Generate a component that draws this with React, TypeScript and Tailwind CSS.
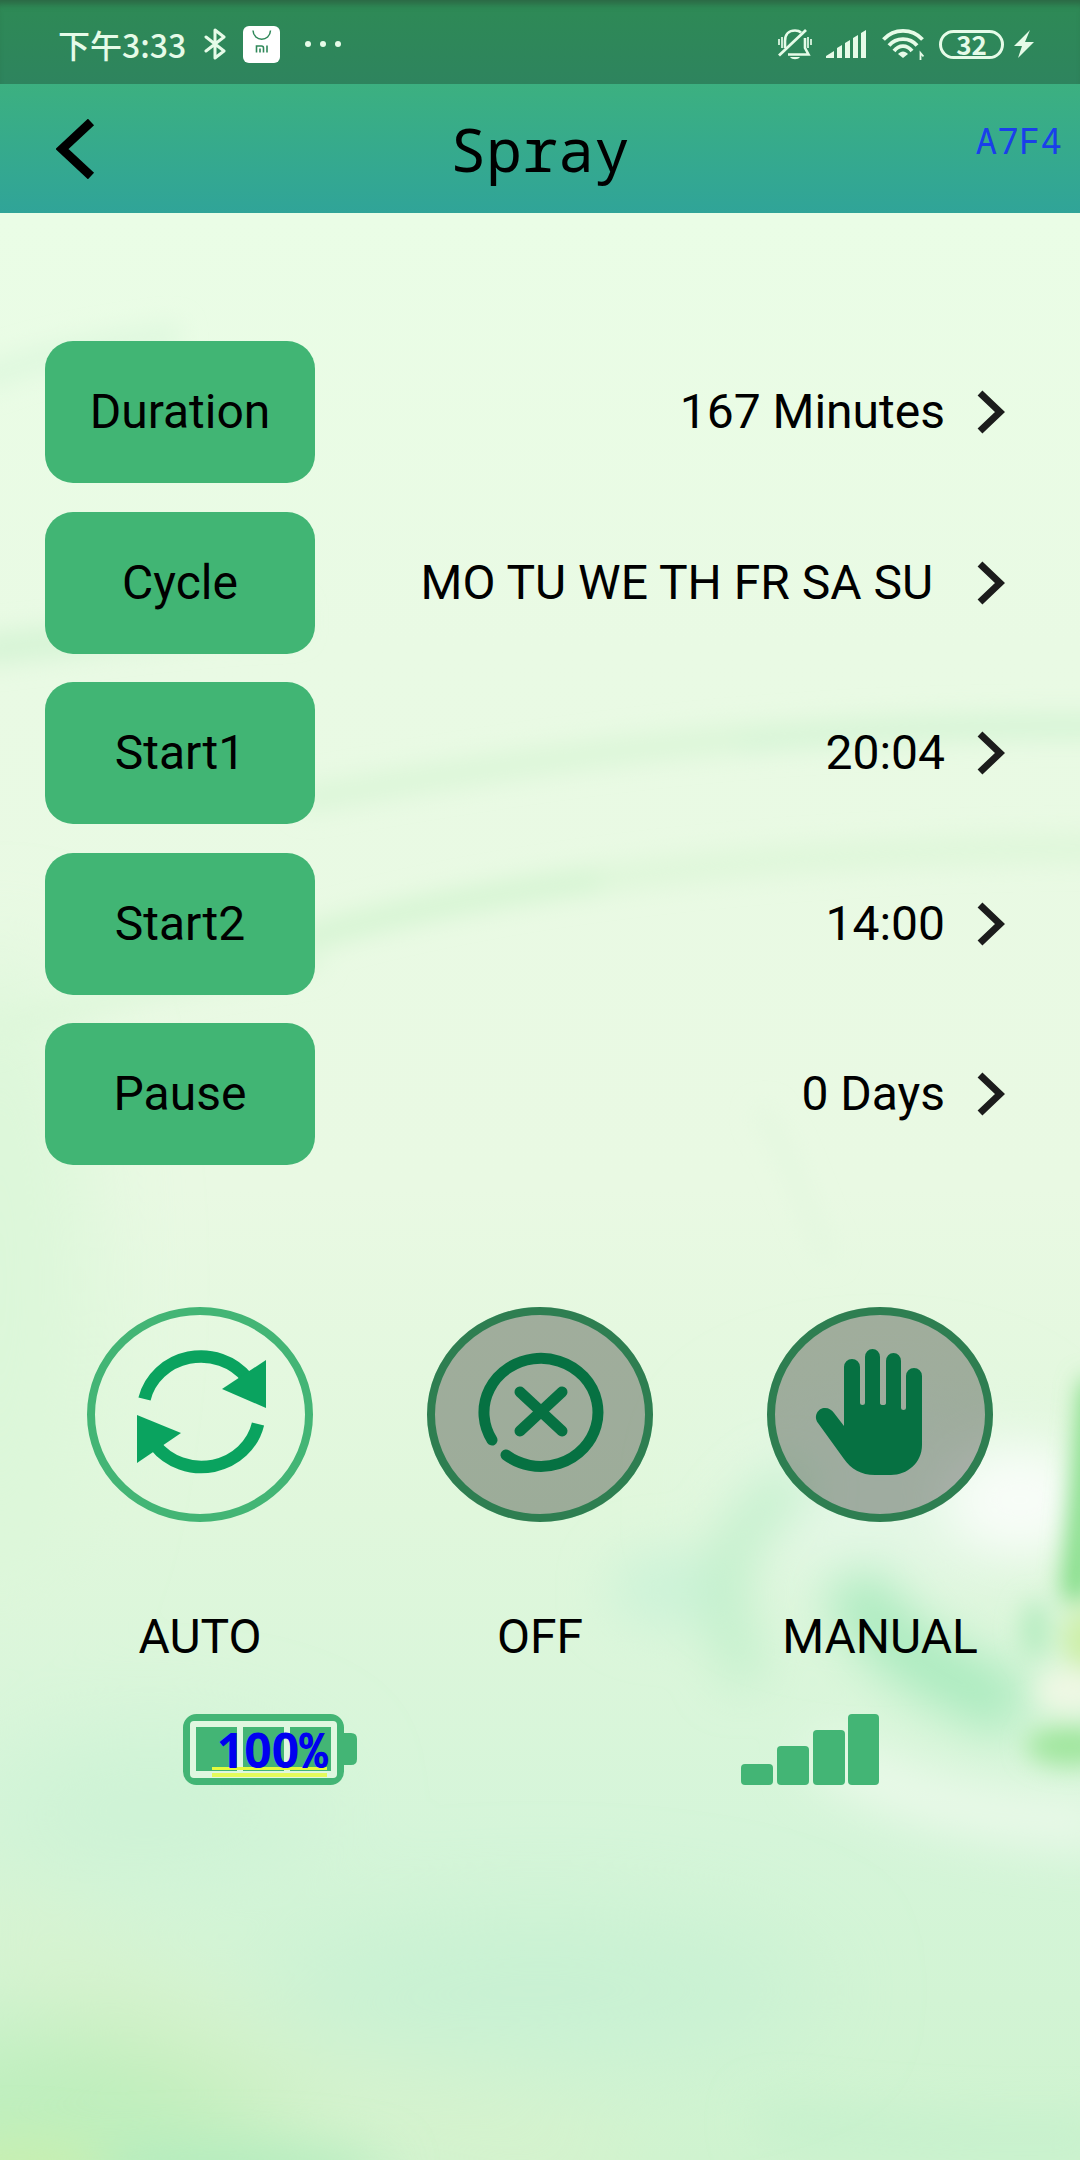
import React, { useState } from 'react';

interface Setting {
  label: string;
  value: string;
}

interface Mode {
  name: string;
  icon: React.ReactNode;
}

const settings: Setting[] = [
  { label: 'Duration', value: '167 Minutes' },
  { label: 'Cycle', value: 'MO TU WE TH FR SA SU ' },
  { label: 'Start1', value: '20:04' },
  { label: 'Start2', value: '14:00' },
  { label: 'Pause', value: '0 Days' },
];

const AutoIcon = () => (
  <>
    <g fill="none" stroke="#0aa35f" strokeWidth="12.500">
      <path d="M57.500 92A58 55 0 0 1 160 71" />
      <path d="M171 117A58 55 0 0 1 68 138" />
    </g>
    <path d="M179 53V101L135 82Z" fill="#0aa35f" />
    <path d="M50 108V156L94 126Z" fill="#0aa35f" />
  </>
);

const OffIcon = () => (
  <g fill="none" stroke="#0aa35f" strokeWidth="11" strokeLinecap="round">
    <path d="M65 133A57 54 0 1 1 79 148" />
    <path d="M93 85L135 124M135 85L93 124" />
  </g>
);

const HandIcon = () => (
  <path
    fill="#0aa35f"
    d="M77 119V60a8 8 0 0 1 16 0V96q0 2 2.500 2t2.500-2V50a7.500 8 0 0 1 15 0V96q0 2 3 2t3-2V54a7.500 8 0 0 1 15 0V101q0 2 2.500 2t2.500-2V69a8 8 0 0 1 16 0V138C155 156 140 168 124 168H108C94 168 84 162 77 152L51 116C46 109 51 101 58 101C62 101 65 103 67 106Z"
  />
);

const modes: Mode[] = [
  { name: 'AUTO', icon: <AutoIcon /> },
  { name: 'OFF', icon: <OffIcon /> },
  { name: 'MANUAL', icon: <HandIcon /> },
];

// Soft water ripple wallpaper
const Wallpaper = () => (
  <svg
    className="absolute inset-0 -z-10 h-full w-full"
    viewBox="0 0 1080 2160"
    preserveAspectRatio="none"
    aria-hidden="true"
  >
    <defs>
      <linearGradient id="base" x1="0" y1="0" x2="0" y2="1">
        <stop offset="0.1" stopColor="#eafde6" />
        <stop offset="0.3" stopColor="#e9fae4" />
        <stop offset="0.55" stopColor="#e9f9e3" />
        <stop offset="0.7" stopColor="#e0f7dc" />
        <stop offset="0.85" stopColor="#d5f5d9" />
        <stop offset="1" stopColor="#cff3cf" />
      </linearGradient>
      <filter id="b10" x="-50%" y="-50%" width="200%" height="200%">
        <feGaussianBlur stdDeviation="12" />
      </filter>
      <filter id="b25" x="-50%" y="-50%" width="200%" height="200%">
        <feGaussianBlur stdDeviation="25" />
      </filter>
      <filter id="b50" x="-60%" y="-60%" width="220%" height="220%">
        <feGaussianBlur stdDeviation="50" />
      </filter>
    </defs>
    <rect width="1080" height="2160" fill="url(#base)" />

    <g filter="url(#b50)">
      <ellipse cx="0" cy="1280" rx="90" ry="330" fill="#dcf7d9" />
      <ellipse cx="150" cy="1810" rx="170" ry="70" fill="#cef3d5" />
      <ellipse cx="540" cy="1990" rx="280" ry="70" fill="#c8f1d3" />
      <ellipse cx="90" cy="2110" rx="230" ry="80" fill="#bdeebb" />
      <path d="M-40 1910L300 2090L620 2170" stroke="#dcf2cb" strokeWidth="50" fill="none" />
      <ellipse cx="880" cy="1500" rx="150" ry="90" fill="#e4f7e6" />
    </g>

    <g filter="url(#b10)" fill="none">
      <path d="M300 800C550 755 780 722 1110 726" stroke="#dbf6d8" strokeWidth="26" />
      <path d="M740 745C860 732 960 726 1110 728" stroke="#d3f4d5" strokeWidth="12" />
      <path d="M300 940C450 895 700 850 1110 848" stroke="#dff7da" strokeWidth="28" />
      <path d="M300 940C400 910 500 892 600 880" stroke="#d3f4d1" strokeWidth="16" />
      <path d="M-20 650C80 640 200 620 300 620" stroke="#d6f4d5" strokeWidth="30" />
      <path d="M-20 1040C60 1005 140 990 320 960" stroke="#def7da" strokeWidth="20" />
      <path d="M-20 380C40 355 100 345 180 335" stroke="#def8de" strokeWidth="24" />
      <path d="M760 1110C790 1150 800 1200 830 1260" stroke="#e3f7df" strokeWidth="16" />
    </g>

    <g filter="url(#b25)">
      <ellipse cx="670" cy="1590" rx="60" ry="40" fill="#cdf3d8" />
      <path d="M800 1480C700 1540 720 1620 750 1680" stroke="#bceec8" strokeWidth="34" fill="none" />
      <path d="M850 1580C880 1650 950 1680 1020 1710" stroke="#a8eabd" strokeWidth="60" fill="none" />
      <ellipse cx="1020" cy="1500" rx="76" ry="56" fill="#f8fdf8" />
      <path d="M820 1750C900 1800 980 1818 1110 1825" stroke="#f0faee" strokeWidth="40" fill="none" />
      <path d="M760 2120C900 2140 1000 2140 1110 2138" stroke="#c0efcb" strokeWidth="26" fill="none" />
      <ellipse cx="220" cy="2170" rx="170" ry="22" fill="#b0ebbb" />
      <ellipse cx="20" cy="2170" rx="90" ry="26" fill="#c8efac" />
    </g>

    <g filter="url(#b10)">
      <path d="M1095 1380L1075 1600" stroke="#78da7d" strokeWidth="26" />
      <ellipse cx="1085" cy="1640" rx="22" ry="30" fill="#cdefa8" />
      <ellipse cx="1035" cy="1630" rx="14" ry="30" fill="#b5ecc0" />
      <ellipse cx="1070" cy="1690" rx="34" ry="22" fill="#eff8e4" />
      <ellipse cx="1070" cy="1746" rx="44" ry="20" fill="#a0e69e" />
    </g>
  </svg>
);

const StatusBar = () => (
  <div className="flex h-[84px] items-center justify-between bg-linear-to-b from-[#2e8a55] to-[#2e845e] pt-1 pr-[46px] pl-[58px] shadow-[inset_0_8px_6px_-4px_#2c6845]">
    <div className="flex items-center">
      <span className="font-['Noto_Sans_CJK_SC',sans-serif] text-[32px] leading-9 font-medium text-[#e6fbe8]">
        下午3:33
      </span>
      <svg className="ml-[18px] h-8 w-[22px]" viewBox="0 0 22 32" fill="none" stroke="#e6fbe8" strokeWidth="3" strokeLinecap="round" strokeLinejoin="round">
        <path d="M2 9L20 23L11 30V2L20 9L2 23" />
      </svg>
      <svg className="ml-[17px] h-[37px] w-[37px]" viewBox="0 0 37 37" fill="none">
        <rect width="37" height="37" rx="6" fill="#fff" />
        <path d="M10 4.500C10.500 16 27 16 27.500 4.500" stroke="#2f8859" strokeWidth="1.500" />
        <path d="M13.500 26.500V20H18.500Q20.500 20 20.500 22V26.500M17 22.500V26.500M24 19.500V26.500" stroke="#2f8859" strokeWidth="1.600" />
      </svg>
      <svg className="ml-[25px] h-2 w-[37px]" viewBox="0 0 37 8" fill="#e6fbe8">
        <circle cx="3" cy="4" r="3" />
        <circle cx="18" cy="4" r="3" />
        <circle cx="33" cy="4" r="3" />
      </svg>
    </div>

    <div className="flex items-center">
      <svg className="h-8 w-[34px]" viewBox="0 0 34 32" fill="none" stroke="#e6fbe8" strokeWidth="2.600">
        <path d="M7 20V13C7 6 11 2.500 17 2.500C19.500 2.500 21.500 3 23 4.500M27 10V20L30.500 26.500H10" />
        <path d="M1 27.500L28 2" strokeWidth="2.800" />
        <path d="M1 11V17M4 9V20M30 9V20M33 11V17" strokeWidth="1.700" />
        <path d="M12 29C14 32 20 32 22 29Z" fill="#e6fbe8" stroke="none" />
      </svg>
      <svg className="ml-3.5 h-7 w-10" viewBox="0 0 40 28" fill="#e6fbe8">
        <path d="M0 28V26L8 21V28ZM11 28V18L16 15V28ZM19 28V13L24 10V28ZM27 28V8L32 5V28ZM35 28V3L40 0V28Z" />
      </svg>
      <svg className="ml-4 h-8 w-[42px]" viewBox="0 0 42 32" fill="none" stroke="#e6fbe8" strokeWidth="3.800">
        <path d="M1.500 11.500C12 0 30 0 40.500 11.500" />
        <path d="M7 17.500C14 9 28 9 35 17.500" />
        <path d="M12 23C17 16.500 25 16.500 30 23" />
        <path d="M16 26C19 22.500 23 22.500 26 26L21 30Z" fill="#e6fbe8" stroke="none" />
        <path d="M38.500 32V25L41.500 28.500" strokeWidth="1.800" />
      </svg>
      <span className="ml-[15px] flex h-[29px] w-[65px] items-center justify-center rounded-full border-3 border-[#e6fbe8] font-['Noto_Sans_CJK_SC',sans-serif] text-[26px] leading-6 font-bold text-[#e6fbe8]">
        32
      </span>
      <svg className="ml-2.5 h-7 w-5" viewBox="0 0 20 28" fill="#e6fbe8">
        <path d="M16 0L0 16H8L4 28L20 12H11Z" />
      </svg>
    </div>
  </div>
);

const SettingRow: React.FC<Setting> = ({ label, value }) => (
  <div className="flex items-center justify-between">
    <button className="h-[142px] w-[270px] rounded-[28px] bg-[#41b574] text-[48px] leading-14">{label}</button>
    <button className="flex items-center gap-8 text-[48px] leading-14 whitespace-pre">
      {value}
      <svg className="h-11 w-7" viewBox="0 0 28 44" fill="none" stroke="#1c1c1c" strokeWidth="7">
        <path d="M3 3L23 22L3 41" />
      </svg>
    </button>
  </div>
);

const ModeButton: React.FC<Mode & { active: boolean; onSelect: () => void }> = ({ name, icon, active, onSelect }) => (
  <button onClick={onSelect} aria-pressed={active} className="flex flex-col items-center gap-[87px]">
    <svg className="h-[215px] w-[226px]" viewBox="0 0 226 215">
      <ellipse cx="113" cy="107.500" rx="109" ry="103.500" fill="none" stroke="#43b575" strokeWidth="8" />
      {icon}
      {/* dim the modes that are not running */}
      {!active && <ellipse cx="113" cy="107.500" rx="113" ry="107.500" fill="#000" fillOpacity="0.300" />}
    </svg>
    <span className="text-[48px] leading-14">{name}</span>
  </button>
);

const Battery = () => (
  <div className="relative h-[71px] w-[174px]">
    <svg className="h-full w-full" viewBox="0 0 174 71">
      <rect x="3.500" y="3.500" width="154" height="64" rx="10" fill="none" stroke="#43b575" strokeWidth="7" />
      <path d="M161 19H168Q174 19 174 25V45Q174 51 168 51H161Z" fill="#43b575" />
      <rect x="7" y="7" width="147" height="57" rx="4" fill="#dff7e0" />
      <path d="M13 13H54V57H13ZM60 13H101V57H60ZM107 13H148V57H107Z" fill="#43b575" />
      <path d="M29 54.500H144" stroke="#e4fb3c" strokeWidth="3" />
      <path d="M29 61H144" stroke="#e4fb5c" strokeWidth="4" />
    </svg>
    <span className="absolute inset-y-0 right-[29px] flex items-center text-[48px] leading-14 font-bold text-[#0000f0]">
      <span className="font-['Noto_Sans',sans-serif]">100</span>
      <span className="font-['Noto_Sans_Mono','DejaVu_Sans_Mono',monospace]">%</span>
    </span>
  </div>
);

const Signal = () => (
  <svg className="h-[71px] w-[138px]" viewBox="0 0 138 71" fill="#43b575">
    <rect x="0" y="50" width="32" height="21" rx="4" />
    <rect x="36" y="32" width="32" height="39" rx="4" />
    <rect x="72" y="16" width="32" height="55" rx="4" />
    <rect x="107" y="0" width="31" height="71" rx="4" />
  </svg>
);

const App = () => {
  const [mode, setMode] = useState('AUTO');

  return (
    <div className="relative isolate min-h-screen overflow-hidden font-[Roboto,sans-serif] text-black">
      <Wallpaper />
      <StatusBar />

      <header className="grid h-[129px] grid-cols-3 items-center bg-linear-to-b from-[#3cb080] to-[#30a498] font-['Noto_Sans_Mono','DejaVu_Sans_Mono',monospace]">
        <button aria-label="Back" className="ml-14 w-10">
          <svg className="h-[60px] w-10" viewBox="0 0 40 60" fill="none" stroke="#000" strokeWidth="9">
            <path d="M35 3L6 30L35 57" />
          </svg>
        </button>
        <h1 className="text-center text-[60px] leading-16">Spray</h1>
        <span className="mr-[18px] mb-4 text-right text-4xl text-[#1a3fea]">A7F4</span>
      </header>

      <main className="pt-32">
        <section className="flex h-[824px] flex-col justify-between pr-[75px] pl-[45px]">
          {settings.map((s) => (
            <SettingRow key={s.label} {...s} />
          ))}
        </section>

        <section className="mt-[142px] grid grid-cols-3 px-[30px]">
          {modes.map((m) => (
            <ModeButton key={m.name} {...m} active={mode === m.name} onSelect={() => setMode(m.name)} />
          ))}
        </section>

        <section className="mt-[49px] grid grid-cols-2 justify-items-center">
          <Battery />
          <Signal />
        </section>
      </main>
    </div>
  );
};

export default App;
